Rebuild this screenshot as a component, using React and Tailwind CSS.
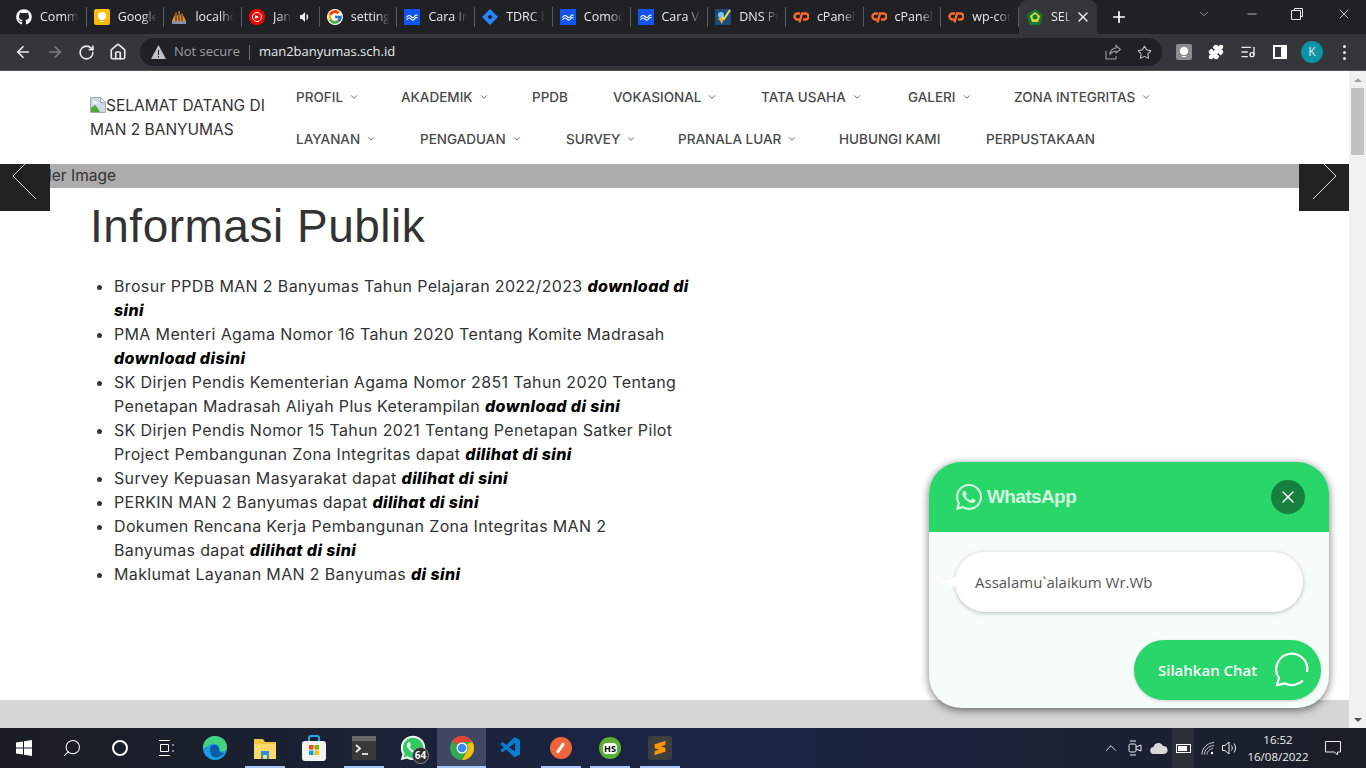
import { ChevronDown, X, ArrowLeft, ArrowRight, RotateCw, Home, Star, Puzzle, ListMusic, Plus, Minus, Search } from "lucide-react";
import { FaGithub, FaWhatsapp } from "react-icons/fa";
import { FcGoogle } from "react-icons/fc";
import { SiSublimetext } from "react-icons/si";
import { VscVscode } from "react-icons/vsc";

const Bulb = ({ bg }) => (
  <span className={"flex h-4 w-4 flex-col items-center justify-center gap-px rounded-[2px] " + bg}>
    <span className="h-[8px] w-[8px] rounded-full bg-white" />
    <span className="h-px w-[4px] bg-white" />
  </span>
);
const Wave = () => (
  <svg width="16" height="16" viewBox="0 0 16 16">
    <rect width="16" height="16" fill="#1254f0" />
    <path d="M2.500 8.500c1.500-2.500 3-2.500 4.500-1s2.500 1.500 3.500 0 2-2 3-1M2.500 11c1.500-2.500 3-2.500 4.500-1s2.500 1.500 3.500 0 2-2 3-1" fill="none" stroke="#fff" strokeWidth="1.100" />
  </svg>
);
const Diamond = () => (
  <svg width="16" height="16" viewBox="0 0 16 16">
    <path d="M8 0l8 8-8 8-8-8z" fill="#2684ff" />
    <path d="M8 5.500L10.500 8 8 10.500 5.500 8z" fill="#202124" />
  </svg>
);
const Man = () => (
  <svg width="16" height="16" viewBox="0 0 16 16">
    <path d="M1 12L5 3l1.500 4L8 1l2 6 1-3 4 8z" fill="#e8912d" />
    <path d="M5 5v7M8 4v8M11 6v6" stroke="#1f1f2a" />
    <rect x="1" y="12" width="14" height="3" fill="#8c8fa8" />
  </svg>
);
const Music = () => (
  <span className="flex h-4 w-4 items-center justify-center rounded-full bg-[#ff0000]">
    <span className="flex h-[10px] w-[10px] items-center justify-center rounded-full border border-white">
      <span className="h-0 w-0 border-y-[2.500px] border-l-[4px] border-y-transparent border-l-white" />
    </span>
  </span>
);
const Dns = () => (
  <svg width="16" height="16" viewBox="0 0 16 16">
    <rect width="16" height="16" fill="#1b4d7a" />
    <circle cx="6" cy="6" r="3" fill="#7fc4e8" />
    <path d="M3 9l4 6 2-6z" fill="#f5a623" />
    <path d="M7 8l2 2 6-9" fill="none" stroke="#f4e04d" strokeWidth="2" />
  </svg>
);
const Cp = () => (
  <svg width="16" height="12" viewBox="0 0 16 12" fill="none" stroke="#f5692b" strokeWidth="2.400">
    <path d="M7 2.500H4.500a3 3 0 0 0 0 6H6.500" />
    <path d="M6.500 11.500L9 2.500h3.500a3 3 0 0 1 0 6H10" />
  </svg>
);
const Kemenag = () => (
  <svg width="16" height="16" viewBox="0 0 16 16">
    <path d="M8 0l8 6-3 10H3L0 6z" fill="#0f7a33" />
    <path d="M8 3l5 4-2 6H5L3 7z" fill="#e7d33a" />
    <circle cx="8" cy="8" r="2.500" fill="#0f7a33" />
  </svg>
);

const tabs = [
  { icon: <FaGithub className="h-4 w-4 text-white" />, title: "Commits" },
  { icon: <Bulb bg="bg-[#fbbc04]" />, title: "Google Keep" },
  { icon: <Man />, title: "localhost" },
  { icon: <Music />, title: "Jang", audio: true },
  { icon: <FcGoogle className="h-4 w-4 rounded-full bg-white" />, title: "settings" },
  { icon: <Wave />, title: "Cara Install" },
  { icon: <Diamond />, title: "TDRC board" },
  { icon: <Wave />, title: "Comodo SSL" },
  { icon: <Wave />, title: "Cara Verifikasi" },
  { icon: <Dns />, title: "DNS Propagation" },
  { icon: <Cp />, title: "cPanel - Tools" },
  { icon: <Cp />, title: "cPanel - Tools" },
  { icon: <Cp />, title: "wp-content" },
];

const menuRows = [
  [
    { label: "PROFIL", w: "w-[105px]", caret: true },
    { label: "AKADEMIK", w: "w-[131px]", caret: true },
    { label: "PPDB", w: "w-[81px]" },
    { label: "VOKASIONAL", w: "w-[148px]", caret: true },
    { label: "TATA USAHA", w: "w-[147px]", caret: true },
    { label: "GALERI", w: "w-[106px]", caret: true },
    { label: "ZONA INTEGRITAS", w: "w-[150px]", caret: true },
  ],
  [
    { label: "LAYANAN", w: "w-[124px]", caret: true },
    { label: "PENGADUAN", w: "w-[146px]", caret: true },
    { label: "SURVEY", w: "w-[112px]", caret: true },
    { label: "PRANALA LUAR", w: "w-[161px]", caret: true },
    { label: "HUBUNGI KAMI", w: "w-[147px]" },
    { label: "PERPUSTAKAAN", w: "w-[120px]" },
  ],
];

// each entry is one list item, each inner pair one visual line: [plain, bold]
const news = [
  [["Brosur PPDB MAN 2 Banyumas Tahun Pelajaran 2022/2023 ", "download di"], ["", "sini"]],
  [["PMA Menteri Agama Nomor 16 Tahun 2020 Tentang Komite Madrasah", ""], ["", "download disini"]],
  [["SK Dirjen Pendis Kementerian Agama Nomor 2851 Tahun 2020 Tentang", ""], ["Penetapan Madrasah Aliyah Plus Keterampilan ", "download di sini"]],
  [["SK Dirjen Pendis Nomor 15 Tahun 2021 Tentang Penetapan Satker Pilot", ""], ["Project Pembangunan Zona Integritas dapat ", "dilihat di sini"]],
  [["Survey Kepuasan Masyarakat dapat ", "dilihat di sini"]],
  [["PERKIN MAN 2 Banyumas dapat ", "dilihat di sini"]],
  [["Dokumen Rencana Kerja Pembangunan Zona Integritas MAN 2", ""], ["Banyumas dapat ", "dilihat di sini"]],
  [["Maklumat Layanan MAN 2 Banyumas ", "di sini"]],
];

function TabStrip() {
  return (
    <div className="flex h-[34px] items-end bg-[#202124] pl-[9px] font-['Open_Sans',sans-serif] text-[12.500px] text-[#e8eaed]">
      {tabs.map((tab, i) => (
        <div key={i} className="flex h-[34px] w-[77.700px] items-center pl-[7px]">
          <span className="flex w-4 shrink-0 items-center justify-center">{tab.icon}</span>
          <span
            className={
              "ml-2 overflow-hidden whitespace-nowrap [mask-image:linear-gradient(to_left,transparent,black_14px)] " +
              (tab.audio ? "w-[19px]" : "w-[39px]")
            }
          >
            {tab.title}
          </span>
          {tab.audio && (
            <svg className="ml-[7px]" width="12" height="12" viewBox="0 0 12 12" fill="#e8eaed">
              <path d="M1 4h2l3-3v10L3 8H1z" />
              <path d="M8 3.500c1 1.500 1 3.500 0 5z" stroke="#e8eaed" />
            </svg>
          )}
          <span className="ml-auto h-5 w-px shrink-0 bg-[#5a5b5e]" />
        </div>
      ))}
      <div className="flex h-[34px] w-[78px] items-center rounded-t-lg bg-[#35363a] pl-2">
        <Kemenag />
        <span className="ml-[8px] w-[20px] overflow-hidden whitespace-nowrap [mask-image:linear-gradient(to_left,transparent,black_6px)]">SELAMAT</span>
        <X className="ml-[4px] h-[16px] w-[16px]" strokeWidth={2.250} />
      </div>
      <Plus className="mb-[8px] ml-[13px] h-[18px] w-[18px] text-white" strokeWidth={2.250} />
      <div className="ml-auto flex h-[34px] items-start text-[#e8eaed]">
        <ChevronDown className="mr-[34px] mt-[7px] h-[14px] w-[14px] text-[#bdc1c6]" strokeWidth={1.250} />
        <Minus className="mr-[32px] mt-[7px] h-[14px] w-[14px]" strokeWidth={1.250} />
        <svg className="mr-[33px] mt-[8px]" width="12" height="12" viewBox="0 0 12 12" fill="none" stroke="#e8eaed">
          <path d="M3.500 2.500V.5h8v8h-2M.5 2.500h9v9h-9z" />
        </svg>
        <X className="mr-[14px] mt-[6px] h-4 w-4" strokeWidth={1.250} />
      </div>
    </div>
  );
}

function Toolbar() {
  return (
    <div className="flex h-[36px] items-center bg-[#35363a] pl-[14px] font-['Open_Sans',sans-serif] text-[#e8eaed]">
      <ArrowLeft className="h-[18px] w-[18px]" strokeWidth={2.250} />
      <ArrowRight className="ml-[14px] h-[18px] w-[18px] text-[#7c7d80]" strokeWidth={2.250} />
      <RotateCw className="ml-[14px] h-[17px] w-[17px]" strokeWidth={2.250} />
      <Home className="ml-[14px] h-[18px] w-[18px]" strokeWidth={2.250} />
      <div className="ml-[13px] flex h-[28px] w-[1022px] items-center rounded-full bg-[#202124] pl-[11px] text-[13px]">
        <svg width="15" height="14" viewBox="0 0 15 14">
          <path d="M7.500 0L15 14H0z" fill="#bdc1c6" />
          <path d="M7 5h1v5H7zM7 11h1v1.500H7z" fill="#202124" />
        </svg>
        <span className="ml-[8px] text-[#9aa0a6]">Not secure</span>
        <span className="ml-[9px] h-[15px] w-px bg-[#6b6c6f]" />
        <span className="ml-[9px] text-[#e8eaed]">man2banyumas.sch.id</span>
        <svg className="ml-auto" width="16" height="16" viewBox="0 0 16 16" fill="none" stroke="#9aa0a6" strokeWidth="1.100">
          <path d="M1 7v8h10v-3M5 10c0-3 3-6 6-6V1.500L15.500 5.500 11 9V7c-2 0-4 1-6 3z" />
        </svg>
        <Star className="ml-[16px] mr-[10px] h-[15px] w-[15px] text-[#bdc1c6]" strokeWidth={1.750} />
      </div>
      <span className="ml-[14px]">
        <Bulb bg="bg-[#8a8c90]" />
      </span>
      <Puzzle className="ml-[16px] h-[16px] w-[16px] fill-white text-white" />
      <ListMusic className="ml-[16px] h-[16px] w-[16px]" strokeWidth={2} />
      <svg className="ml-[17px]" width="14" height="14" viewBox="0 0 14 14">
        <path d="M0 0h14v14H0zM2 2v10h6V2z" fill="#fff" fillRule="evenodd" />
      </svg>
      <span className="ml-[14px] flex h-[22px] w-[22px] items-center justify-center rounded-full bg-[#0b93a8] text-[12px] text-[#e8eaed]">K</span>
      <span className="ml-[20px] flex flex-col gap-[3px]">
        <span className="h-[3px] w-[3px] rounded-full bg-[#e8eaed]" />
        <span className="h-[3px] w-[3px] rounded-full bg-[#e8eaed]" />
        <span className="h-[3px] w-[3px] rounded-full bg-[#e8eaed]" />
      </span>
    </div>
  );
}

function SiteHeader() {
  return (
    <header className="flex h-[93px] bg-white pl-[90px] font-['Inter',sans-serif] text-[#333]">
      <div className="w-[206px] pt-[23px] text-[15.500px] leading-[24px]">
        <svg className="inline align-[-2px]" width="16" height="16" viewBox="0 0 16 16">
          <path d="M.5.500h10l5 5v10H.5z" fill="#cfd9ea" stroke="#a9a9a9" />
          <path d="M1 15V11l4-3 2 2 3 5z" fill="#4fa83d" />
          <path d="M3 5a1.500 1.500 0 0 1 3 0h2v1.500H2.500z" fill="#fff" />
          <path d="M10.500.5l5 5h-5z" fill="#fff" stroke="#a9a9a9" />
        </svg>
        SELAMAT DATANG DI MAN 2 BANYUMAS
      </div>
      <nav className="pt-[5px]">
        {menuRows.map((row, r) => (
          <ul key={r} className="flex h-[42px] items-center">
            {row.map((item) => (
              <li key={item.label} className={"flex items-center whitespace-nowrap text-[13.500px] font-medium text-[#4a4a4a] " + item.w}>
                {item.label}
                {item.caret && <ChevronDown className="ml-[6px] h-[10px] w-[10px]" strokeWidth={2} />}
              </li>
            ))}
          </ul>
        ))}
      </nav>
    </header>
  );
}

function WhatsappWidget() {
  return (
    <aside className="absolute bottom-[20px] right-[20px] h-[246px] w-[400px] overflow-hidden rounded-[32px] bg-[#f6fcf9] shadow-[0_2px_8px_rgba(0,0,0,0.55)]">
      <div className="flex h-[70px] items-center bg-[#28d66a] pl-[25px] pr-[24px] font-['Liberation_Sans',sans-serif] text-[#d4f7e1]">
        <FaWhatsapp className="h-[30px] w-[30px]" />
        <span className="ml-[3px] text-[19px] font-bold tracking-[-0.600px]">WhatsApp</span>
        <span className="ml-auto flex h-[34px] w-[34px] items-center justify-center rounded-full bg-[#18803f] text-white">
          <X className="h-[20px] w-[20px]" strokeWidth={1.750} />
        </span>
      </div>
      <div className="flex flex-col items-end font-['Open_Sans',sans-serif]">
        <div className="relative mr-[26px] mt-[20px] flex h-[60px] w-[348px] items-center rounded-full bg-white pl-[20px] text-[15px] text-[#555] shadow-[0_1px_4px_rgba(0,0,0,0.25)]">
          <span className="absolute left-[-15px] top-[25px] h-[10px] w-[20px] bg-white [clip-path:polygon(0_50%,45%_30%,75%_0,100%_0,100%_100%,75%_100%,45%_70%)]" />
          Assalamu`alaikum Wr.Wb
        </div>
        <div className="mr-[8px] mt-[28px] flex h-[60px] w-[187px] items-center rounded-full bg-[#28d66a] pl-[24px] text-[15px] font-semibold text-white shadow-[0_1px_3px_rgba(0,0,0,0.2)]">
          Silahkan Chat
          <svg className="ml-auto mr-[11px]" width="36" height="36" viewBox="0 0 36 36" fill="none" stroke="#fff" strokeWidth="2.200">
            <path d="M33 20a15.500 15.500 0 1 0-28 6l-2 7 8-1.500a16 16 0 0 0 18-3" />
          </svg>
        </div>
      </div>
    </aside>
  );
}

function PageScrollbar() {
  return (
    <div className="flex w-[17px] flex-col items-center bg-[#f1f1f1]">
      <span className="mt-[7px] h-0 w-0 border-x-[4px] border-b-[4px] border-x-transparent border-b-[#a3a3a3]" />
      <span className="mt-[6px] h-[67px] w-[13px] bg-[#c1c1c1]" />
      <span className="mb-[6px] mt-auto h-0 w-0 border-x-[4px] border-t-[4px] border-x-transparent border-t-[#505050]" />
    </div>
  );
}

function Page() {
  return (
    <div className="flex h-[658px] border-t border-[#55565a]">
      <div className="relative flex flex-1 flex-col overflow-hidden bg-white">
        <SiteHeader />
        <div className="h-[24px] bg-[#acacac] pl-[35px] font-['Inter',sans-serif] text-[15.500px] leading-[23px] text-[#333]">
          <span className="inline-block w-[81px] overflow-hidden whitespace-nowrap [direction:rtl]">Slider Image</span>
        </div>
        <main className="flex-1 pl-[90px] pt-[13px]">
          <h1 className="font-['Liberation_Sans',sans-serif] text-[46px] leading-[50px] tracking-[0.500px] text-[#333]">Informasi Publik</h1>
          <ul className="mt-[23px] list-disc pl-[24px] font-['Inter',sans-serif] text-[16px] leading-[24px] tracking-[0.350px] text-[#333]">
            {news.map((lines, i) => (
              <li key={i} className="whitespace-nowrap">
                {lines.map(([plain, bold], j) => (
                  <span key={j}>
                    {j > 0 && <br />}
                    {plain}
                    <b className="font-extrabold italic tracking-[0.400px] text-black">{bold}</b>
                  </span>
                ))}
              </li>
            ))}
          </ul>
        </main>
        <div className="h-[28px] bg-[#d6d6d6]" />
        <button className="absolute left-0 top-[93px] flex h-[47px] w-[50px] items-start bg-[#222]">
          <svg width="50" height="36" viewBox="0 0 50 36" fill="none" stroke="#ddd" strokeWidth="1">
            <path d="M26 -1L13 12l23 23" />
          </svg>
        </button>
        <button className="absolute right-0 top-[93px] flex h-[47px] w-[50px] items-start bg-[#222]">
          <svg width="50" height="36" viewBox="0 0 50 36" fill="none" stroke="#ddd" strokeWidth="1">
            <path d="M24 -1l13 13-23 23" />
          </svg>
        </button>
        <WhatsappWidget />
      </div>
      <PageScrollbar />
    </div>
  );
}

const Slot = ({ w, active, on, children }) => (
  <div className={"relative flex h-10 items-center justify-center " + w + (active ? " bg-[#3f4762]" : "")}>
    {children}
    {on && <span className={"absolute bottom-0 h-[2px] bg-[#a8c5f7] " + (active ? "w-full" : "w-[40px]")} />}
  </div>
);

function Taskbar() {
  return (
    <footer className="flex h-10 items-center bg-gradient-to-r from-[#1a1d24] via-[#1b2545] to-[#1a1e28] font-['Open_Sans',sans-serif] text-white">
      <Slot w="w-[48px]">
        <svg width="16" height="16" viewBox="0 0 16 16" fill="#fff">
          <path d="M0 2.500l7-1v6H0zM8 1.300L16 0v7.500H8zM0 8.500h7v6l-7-1zM8 8.500h8V16l-8-1.300z" />
        </svg>
      </Slot>
      <Slot w="w-[48px]">
        <Search className="h-[20px] w-[20px] -scale-x-100" strokeWidth={1.250} />
      </Slot>
      <Slot w="w-[48px]">
        <span className="h-4 w-4 rounded-full border-2 border-white" />
      </Slot>
      <Slot w="w-[46px]">
        <svg width="16" height="16" viewBox="0 0 16 16" fill="none" stroke="#fff">
          <path d="M0 .5h11M0 15.500h11M1.500 4.500h8v7h-8zM14 4v2M14 10v2" />
        </svg>
      </Slot>
      <Slot w="w-[50px]">
        <svg width="24" height="24" viewBox="0 0 24 24">
          <circle cx="12" cy="12" r="12" fill="#1b9de2" />
          <path d="M12 0c7 0 12 5 12 11 0 4-4 5-7 4 0-5-4-9-9-7C4 10 2 12 0 12 0 5 5 0 12 0z" fill="#43d27c" />
          <path d="M7 13c0-5 8-6 9 0 0 3 2 4 5 4-3 5-14 8-14-4z" fill="#0c5aa6" />
        </svg>
      </Slot>
      <Slot w="w-[49px]" on>
        <svg width="24" height="24" viewBox="0 0 24 24">
          <path d="M1 3h9l2 3h11v17H1z" fill="#f5c344" />
          <path d="M1 8h22v15H1z" fill="#fbd96b" />
          <path d="M8 23v-8h8v8h-2v-4h-4v4z" fill="#2a8fd8" />
        </svg>
      </Slot>
      <Slot w="w-[50px]">
        <svg width="24" height="26" viewBox="0 0 24 26">
          <path d="M7 7V3a2 2 0 0 1 2-2h6a2 2 0 0 1 2 2v4" fill="none" stroke="#2aa4e8" strokeWidth="2" />
          <rect y="6" width="24" height="20" rx="3" fill="#f3f3f3" />
          <rect x="7" y="10" width="4.500" height="4.500" fill="#f25022" />
          <rect x="12.500" y="10" width="4.500" height="4.500" fill="#7fba00" />
          <rect x="7" y="15.500" width="4.500" height="4.500" fill="#00a4ef" />
          <rect x="12.500" y="15.500" width="4.500" height="4.500" fill="#ffb900" />
        </svg>
      </Slot>
      <Slot w="w-[49px]" on>
        <svg width="24" height="24" viewBox="0 0 24 24">
          <rect width="24" height="24" rx="1.500" fill="#3a3a3a" />
          <rect width="24" height="5" fill="#6a6a6a" />
          <path d="M4 9l4 3.500L4 16" fill="none" stroke="#eee" strokeWidth="1.800" />
          <path d="M10 18h6" stroke="#eee" strokeWidth="1.800" />
        </svg>
      </Slot>
      <Slot w="w-[49px]">
        <span className="flex h-[24px] w-[24px] items-center justify-center rounded-full bg-[#2fcb62]">
          <FaWhatsapp className="h-[28px] w-[28px] shrink-0 text-[#f0f8f2]" />
        </span>
        <span className="absolute left-[24px] top-[19px] flex h-[17px] w-[17px] items-center justify-center rounded-full border border-[#8a8a8a] bg-[#2b2b2f] text-[10px] font-bold">64</span>
      </Slot>
      <Slot w="w-[49px]" active on>
        <svg width="24" height="24" viewBox="0 0 24 24">
          <circle cx="12" cy="12" r="12" fill="#34a853" />
          <path d="M12 0a12 12 0 0 1 10.400 6H12a6 6 0 0 0-5.600 3.500L2.500 4.500A12 12 0 0 1 12 0z" fill="#ea4335" />
          <path d="M22.400 6A12 12 0 0 1 12 24l5-8.500A6 6 0 0 0 17 8z" fill="#fbbc05" />
          <circle cx="12" cy="12" r="5.500" fill="#fff" />
          <circle cx="12" cy="12" r="4.300" fill="#4285f4" />
        </svg>
      </Slot>
      <Slot w="w-[50px]">
        <VscVscode className="h-[24px] w-[24px] text-[#0a7ccc]" />
      </Slot>
      <Slot w="w-[49px]" on>
        <span className="flex h-[22px] w-[22px] items-center justify-center rounded-full bg-[#f1643c]">
          <span className="h-[12px] w-[3px] rotate-[35deg] rounded-full bg-white" />
        </span>
      </Slot>
      <Slot w="w-[50px]" on>
        <span className="flex h-[22px] w-[22px] items-center justify-center rounded-full bg-[#5bb033] text-[9px] font-bold">
          <span className="rounded-sm bg-white px-[1px] leading-[11px] text-black">HS</span>
        </span>
      </Slot>
      <Slot w="w-[49px]" on>
        <span className="flex h-[24px] w-[24px] items-center justify-center rounded-[2px] bg-[#3f3f3f]">
          <SiSublimetext className="h-[14px] w-[14px] text-[#ff9800]" />
        </span>
      </Slot>
      <div className="ml-auto flex h-10 items-center text-[#f0f0f0]">
        <ChevronDown className="h-[18px] w-[18px] rotate-180" strokeWidth={1.250} />
        <svg className="ml-[8px]" width="14" height="16" viewBox="0 0 14 16" fill="none" stroke="#eee">
          <rect x="1" y="4" width="7" height="8" rx="1.500" />
          <path d="M8 7l5-2v6l-5-2M2 1h6M2 15h6" />
        </svg>
        <svg className="ml-[8px]" width="18" height="11" viewBox="0 0 18 11" fill="#d8d8d8">
          <path d="M4 11a3.500 3.500 0 0 1-.5-7A5 5 0 0 1 13 3a4 4 0 0 1 1 8z" />
        </svg>
        <span className="ml-[4px] flex h-10 w-[22px] items-center justify-center bg-[#2a2f3a]">
          <span className="flex h-[9px] w-[15px] items-center border border-white p-[1px]">
            <span className="h-full w-[9px] bg-white" />
          </span>
        </span>
        <svg className="ml-[7px]" width="14" height="13" viewBox="0 0 14 13" fill="none" stroke="#ccc">
          <path d="M1 12.500C1 6 6 1 13 .5M3.500 12.500C3.500 8 7 4 13 3.500M6 12.500C6 10 8 7 12 6.500" />
          <circle cx="11" cy="11" r="1.200" fill="#fff" stroke="none" />
        </svg>
        <svg className="ml-[7px]" width="16" height="14" viewBox="0 0 16 14" fill="none" stroke="#eee">
          <path d="M.5 4.500h2.500L7 1v12L3 9.500H.5zM9.500 4.500c1 1.500 1 3.500 0 5M12 2.500c2 2.500 2 6.500 0 9" />
        </svg>
        <div className="ml-[4px] w-[72px] text-center text-[11.500px] leading-[17px]">
          <div>16:52</div>
          <div>16/08/2022</div>
        </div>
        <svg className="ml-[11px] mr-[25px]" width="16" height="15" viewBox="0 0 16 15" fill="none" stroke="#eee">
          <path d="M.5.500h15v10.500h-3v3l-3-3H.5z" />
        </svg>
      </div>
    </footer>
  );
}

export default function App() {
  return (
    <div className="h-[768px] w-[1366px] overflow-hidden">
      <TabStrip />
      <Toolbar />
      <Page />
      <Taskbar />
    </div>
  );
}
